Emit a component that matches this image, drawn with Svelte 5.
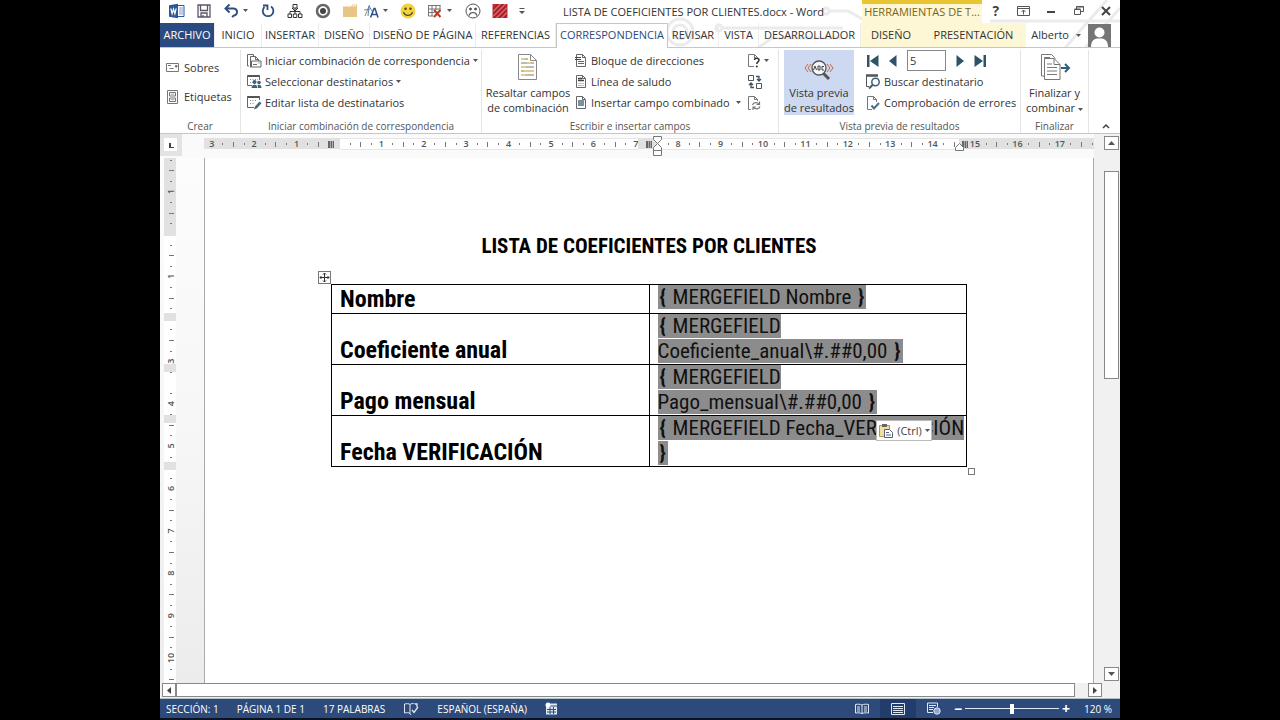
<script>
  let quick = [
    'word',
    'save',
    'undo',
    'redo',
    'tree',
    'target',
    'folder',
    'styles',
    'smile',
    'grid',
    'sad',
    'hatch',
    'more',
  ]
  let tabs = [
    'INICIO',
    'INSERTAR',
    'DISEÑO',
    'DISEÑO DE PÁGINA',
    'REFERENCIAS',
    'CORRESPONDENCIA',
    'REVISAR',
    'VISTA',
    'DESARROLLADOR',
  ]
  let toolTabs = ['DISEÑO', 'PRESENTACIÓN']
  let rows = [
    { name: 'Nombre', code: ['MERGEFIELD Nombre'] },
    { name: 'Coeficiente anual', code: ['MERGEFIELD', 'Coeficiente_anual\\#.##0,00'] },
    { name: 'Pago mensual', code: ['MERGEFIELD', 'Pago_mensual\\#.##0,00'] },
    { name: 'Fecha VERIFICACIÓN', code: ['MERGEFIELD Fecha_VERIFICACIÓN', ''] },
  ]

  let record = 5
  let zoom = 50

  const CM = 42.4

  // one mark for each quarter: number, dot, half line, dot
  function marks(from, to, zero, skip) {
    let list = []
    for (let q = from * 4; q <= to * 4; q++) {
      let n = Math.abs(q / 4)
      if (skip.includes(q)) continue
      list.push({
        at: zero + (q * CM) / 4,
        kind: q % 4 === 0 ? 'num' : q % 2 === 0 ? 'half' : 'dot',
        n,
      })
    }
    return list
  }

  let across = marks(-3, 17.75, 135, [0, 29, 30, 59])
  let down = marks(-1.75, 10.5, 76, [0, 8, 14, 22])
</script>

{#snippet icon(name)}
  {#if name === 'word'}
    <svg width="16" height="16" viewBox="0 0 16 16">
      <path d="M8 2.5h7v11H8" fill="#fff" stroke="#2b579a" />
      <path d="M10 5h4M10 7h4M10 9h4M10 11h4" stroke="#7f9cc9" />
      <path d="M0 2.2 9 .8v14.4L0 13.8z" fill="#2b579a" />
      <path d="m1.8 5.3 1.3 5.4L4.5 6l1.4 4.7 1.3-5.4" fill="none" stroke="#fff" stroke-width="1.2" />
    </svg>
  {:else if name === 'save'}
    <svg width="16" height="16" viewBox="0 0 16 16" fill="none" stroke="#5d5468" stroke-width="1.3">
      <path d="M2 2h12v12H2z" />
      <path d="M4.5 2v5.5h7V2M5 14v-4h6v4M7 14v-2" />
    </svg>
  {:else if name === 'undo'}
    <svg width="16" height="16" viewBox="0 0 16 16" fill="none" stroke="#2f4f83" stroke-width="2">
      <path d="M3 5.5h7a3.500 3.500 0 0 1 1 7L9 14" />
      <path d="M6.500 1.500 2.500 5.500l4 4" />
    </svg>
  {:else if name === 'redo'}
    <svg width="16" height="16" viewBox="0 0 16 16" fill="none" stroke="#2f4f83" stroke-width="1.8">
      <path d="M11 3.500A5.300 5.300 0 1 1 4.500 4" />
      <path d="M3 2.500h4.500V7" />
    </svg>
  {:else if name === 'tree'}
    <svg width="16" height="16" viewBox="0 0 16 16" fill="#fff" stroke="#333">
      <path d="M8 5v3M3 11V8.500h10V11M8 8v3" fill="none" />
      <path d="M6 1.500h4v3.500H6zM1 11h3.500v3.500H1zM6.300 11h3.500v3.500H6.300zM11.500 11H15v3.500h-3.500z" />
      <path d="m5 5 3 3 3-3" fill="none" />
    </svg>
  {:else if name === 'target'}
    <svg width="16" height="16" viewBox="0 0 16 16">
      <circle cx="8" cy="8" r="6" fill="#fff" stroke="#666" stroke-width="2.5" />
      <circle cx="8" cy="8" r="3" fill="#444" />
    </svg>
  {:else if name === 'folder'}
    <svg width="16" height="16" viewBox="0 0 16 16">
      <path d="M1 3.500h8L10.500 1.500H15V14H1z" fill="#e9c585" />
      <path d="M10.500 2.800H14" stroke="#fff" />
    </svg>
  {:else if name === 'styles'}
    <svg width="16" height="16" viewBox="0 0 16 16" fill="none">
      <path d="M2 13 6.500 2M1 7l6-1" stroke="#888" />
      <path d="m5 13 1-10 3 5" stroke="#5b7fae" />
      <path d="M7.500 14.500 11 5.500h1l3 9M9 11.500h5" stroke="#2f4f83" stroke-width="1.5" />
    </svg>
  {:else if name === 'smile'}
    <svg width="16" height="16" viewBox="0 0 16 16">
      <circle cx="8" cy="8" r="7.5" fill="#f6d33c" />
      <circle cx="5.5" cy="5.8" r="1.2" fill="#443" />
      <circle cx="10.5" cy="5.8" r="1.2" fill="#443" />
      <path d="M3.500 9c1.500 4.500 7.500 4.500 9 0" fill="none" stroke="#443" stroke-width="1.2" />
    </svg>
  {:else if name === 'grid'}
    <svg width="16" height="16" viewBox="0 0 16 16" fill="none">
      <path d="M1.500 2.500h12M1.500 6h12M1.500 9.500h6M1.500 13h5M1.500 2v11M5 2v11M9 2v5M13 2v5" stroke="#777" />
      <path d="m7 7 6.500 7M13.500 7 7 14" stroke="#b83a26" stroke-width="2" />
    </svg>
  {:else if name === 'sad'}
    <svg width="16" height="16" viewBox="0 0 16 16" fill="none" stroke="#555">
      <circle cx="8" cy="8" r="7" fill="#fff" />
      <circle cx="5.5" cy="6" r="1" fill="#444" />
      <circle cx="10.5" cy="6" r="1" fill="#444" />
      <path d="M4 12.500c1.200-4 6.800-4 8 0" stroke-width="1.2" />
    </svg>
  {:else if name === 'hatch'}
    <svg width="16" height="16" viewBox="0 0 16 16">
      <path d="M.5 1h15v14H.5z" fill="#bd2c35" />
      <path d="m1 6 5-5M1 11 11 1M2 15 15 2M7 15l8-8M12 15l3-3" stroke="#8f1f28" />
      <path d="m1 8.500 7.500-7.500M1 13.500 13.500 1M4.500 15 15 4.500M9.500 15 15 9.500" stroke="#e88a8f" />
    </svg>
  {:else if name === 'more'}
    <svg width="8" height="8" viewBox="0 0 8 8">
      <path d="M1.500 1.500h5" stroke="#555" />
      <path d="M1 4h6L4 7z" fill="#555" />
    </svg>
  {:else if name === 'caret'}
    <svg class="caret" width="5" height="3" viewBox="0 0 5 3">
      <path d="M0 0h5L2.500 3z" fill="#555" />
    </svg>
  {:else if name === 'envelope'}
    <svg width="16" height="14" viewBox="0 0 16 14" fill="none" stroke="#777">
      <path d="M1.500 2.500h12v8h-12z" fill="#fff" />
      <path d="M3 4.500h3M4.500 7.500h4" />
      <path d="M10.500 4.500h1.500v1.500h-1.500z" fill="#555" />
    </svg>
  {:else if name === 'labels'}
    <svg width="16" height="16" viewBox="0 0 16 16" fill="none" stroke="#777">
      <path d="M2.500 1.500h10v13h-10z" fill="#fff" />
      <path d="M4.500 3.500h6v3.500h-6zM4.500 9h6v3.500h-6z" />
      <path d="M5.500 5.200h4M5.500 10.700h4" stroke="#aaa" />
    </svg>
  {:else if name === 'start'}
    <svg width="16" height="16" viewBox="0 0 16 16" fill="none" stroke="#666">
      <path d="M3 13H1.500V1.500h6V3" />
      <path d="M4.500 14.500V3.500h5l3 3V8" />
      <path d="M9.500 3.500v3h3" />
      <path d="M5.500 8h9.500v6H5.500z" fill="#fff" />
      <path d="M7 11.500h4M12.500 10h1" />
    </svg>
  {:else if name === 'people'}
    <svg width="16" height="16" viewBox="0 0 16 16" fill="none">
      <path d="M6 11.500H1.500v-10h12V6" stroke="#666" />
      <path d="M1.500 2h12" stroke="#555" stroke-width="2" />
      <path d="M4 5.500h8M4 8.500h3" stroke="#888" stroke-dasharray="1 1.5" />
      <circle cx="8.5" cy="8" r="2" fill="#3b6179" />
      <circle cx="13" cy="8.5" r="1.8" fill="#3b6179" />
      <path d="M5.500 14c0-4.500 6-4.500 6 0zM12 14c0-2-.3-2.500-.5-3 2-1 4 0 4 3z" fill="#3b6179" />
    </svg>
  {:else if name === 'edit'}
    <svg width="16" height="16" viewBox="0 0 16 16" fill="none">
      <path d="M8 12.500H1.500v-11h12V5" stroke="#666" />
      <path d="M1.500 2h12" stroke="#555" stroke-width="2" />
      <path d="M4 5.500h7M4 8.500h5" stroke="#888" stroke-dasharray="1 1.5" />
      <path d="m9 11.500 4.500-5 2 1.800-4.500 5-3 1.200z" fill="#4c6579" />
    </svg>
  {:else if name === 'highlight'}
    <svg width="24" height="28" viewBox="0 0 24 28" fill="none">
      <path d="M2.500 1.500h12l6 6v19h-18z" fill="#fff" stroke="#888" />
      <path d="M14.500 1.500v6h6" stroke="#888" />
      <path d="M5 6h4M11 10h4M5 14h5M8 18h10M5 22h5" stroke="#e3cd84" stroke-width="2" />
      <path d="M9 6h3M5 10h6M15 10h3M10 14h8M5 18h3M10 22h8" stroke="#777" />
    </svg>
  {:else if name === 'address' || name === 'greeting' || name === 'field'}
    <svg width="14" height="15" viewBox="0 0 14 15" fill="none" stroke="#666">
      <path d="M2.500 1.500h6l3 3v9h-9z" fill="#fff" />
      <path d="M8.500 1.500v3h3" />
      {#if name === 'field'}
        <path d="M4 6h6M4 8h6M4 10h6" stroke="#4c6f87" stroke-width="1.4" />
      {:else if name === 'greeting'}
        <path d="M4 4.500h4M4 6.500h6" stroke="#444" stroke-width="1.4" />
        <path d="M4 9.500h6M4 11.500h6" stroke="#bbb" />
      {:else}
        <path d="M1 4.500h6M1 6.500h6" stroke="#444" />
        <path d="M4 8.500h6M4 10.500h6" />
      {/if}
    </svg>
  {:else if name === 'rules'}
    <svg width="14" height="16" viewBox="0 0 14 16" fill="none">
      <path d="M7 13.500H1.500v-12h6l3 3" stroke="#777" />
      <path d="M7.500 1.500v3.500h2" stroke="#777" />
      <path d="M7.500 7c0-2.500 4.500-2.500 4.500 0 0 2-2.200 1.800-2.200 4" stroke="#333" stroke-width="1.5" />
      <circle cx="9.8" cy="13.5" r="1" fill="#333" />
    </svg>
  {:else if name === 'match'}
    <svg width="16" height="16" viewBox="0 0 16 16" fill="none" stroke="#555">
      <path d="M1.500 1.500h5v5h-5zM9.500 9.500h5v5h-5z" />
      <path d="M9 2.500h3V7M10 5l2 2 2-2M7 13.500H4V9M2 11l2-2 2 2" stroke="#3b5166" stroke-width="1.3" />
    </svg>
  {:else if name === 'refresh'}
    <svg width="14" height="16" viewBox="0 0 14 16" fill="none">
      <path d="M4 14.500H1.500v-13h6l3 3V6M7.500 1.500v3h3" stroke="#777" />
      <path d="M5.500 10c1-3 5-3 6.500-.8M12.500 6.500v3H9.500M13 11.500c-1 3-5 3-6.500.8M6 15v-3h3" stroke="#777" stroke-width="1.2" />
    </svg>
  {:else if name === 'preview'}
    <svg width="30" height="22" viewBox="0 0 30 22" fill="none">
      <path d="m4 5-3 4 3 4M7 5 4 9l3 4M23 5l3 4-3 4M26 5l3 4-3 4" stroke="#c9683f" />
      <path d="m19 14 6 6" stroke="#555" stroke-width="3" />
      <circle cx="15" cy="9" r="7" fill="#f3f6fb" stroke="#555" stroke-width="1.3" />
      <path d="M9.500 11 11 7l1.500 4M14 7v4h2V7zM20 7.500h-2v3.500h2" stroke="#444" />
    </svg>
  {:else if name === 'first'}
    <svg width="12" height="12" viewBox="0 0 12 12" fill="#2e5266">
      <path d="M0 0h2.500v12H0zM11.500 0v12L3 6z" />
    </svg>
  {:else if name === 'prev'}
    <svg width="12" height="12" viewBox="0 0 12 12" fill="#2e5266"><path d="M9.500 0v12L2 6z" /></svg>
  {:else if name === 'next'}
    <svg width="12" height="12" viewBox="0 0 12 12" fill="#2e5266"><path d="M2.500 0v12L10 6z" /></svg>
  {:else if name === 'last'}
    <svg width="12" height="12" viewBox="0 0 12 12" fill="#2e5266">
      <path d="M9.500 0H12v12H9.500zM.5 0v12L9 6z" />
    </svg>
  {:else if name === 'find'}
    <svg width="16" height="16" viewBox="0 0 16 16" fill="none">
      <path d="M4 12.500H1.500V2" stroke="#555" />
      <path d="M1 1.500h12" stroke="#555" stroke-width="2.5" />
      <circle cx="10.5" cy="8" r="3.7" stroke="#3b6179" stroke-width="1.5" />
      <path d="m8 10.500-4 4" stroke="#3b6179" stroke-width="2" />
    </svg>
  {:else if name === 'check'}
    <svg width="16" height="16" viewBox="0 0 16 16" fill="none">
      <path d="M7 14.500H2.500v-13h6l3 3V7M8.500 1.500v3h3" stroke="#777" />
      <path d="m6.500 10.500 2.500 3 5-5.500" stroke="#4b6d85" stroke-width="2" />
    </svg>
  {:else if name === 'finish'}
    <svg width="32" height="28" viewBox="0 0 32 28" fill="none">
      <path d="M5 23H2.500V1.500h10l4 4M5.500 26.500v-21H15l6 6v15z" stroke="#777" fill="#fff" />
      <path d="M15 5.500v6h6M8 11h5M8 14.500h10M8 18h10M8 21.500h10M5 4.500h6" stroke="#777" />
      <path d="M22 15h7M26 11l4 4-4 4" stroke="#2f5f7a" stroke-width="2" />
    </svg>
  {:else if name === 'paste'}
    <svg width="16" height="16" viewBox="0 0 16 16" fill="none">
      <path d="M1.500 2.500h10v11h-10z" fill="#f2dfa0" stroke="#b09a55" />
      <path d="M4 1h5v3H4z" fill="#666" />
      <path d="M6.500 6.500h5l3 3v5h-8z" fill="#fff" stroke="#55617c" />
      <path d="M8 9.500h3M8 12h5" stroke="#55617c" />
    </svg>
  {:else if name === 'proof'}
    <svg width="16" height="14" viewBox="0 0 16 14" fill="none" stroke="#dfe8f5">
      <path d="M7 11.500c-1-1-3-1-5.500-.5v-9C4 1.500 6 1.500 7 2.500zM7 2.500c1-1 3-1 4.500-.8M7 11.500l1 1.500" />
      <path d="m9 8 2 2.500L15 5M12 2h2v3" stroke-width="1.3" />
    </svg>
  {:else if name === 'macro'}
    <svg width="13" height="13" viewBox="0 0 13 13">
      <path d="M1 4.500h11v8H1z" fill="#dfe8f5" />
      <path d="M5 1.500h7v2H5z" fill="#dfe8f5" />
      <circle cx="3" cy="3" r="2.5" fill="#fff" />
      <path d="M2 7.500h9M2 10h9M5 5v7M8.500 5v7" stroke="#2d4a7a" />
    </svg>
  {:else if name === 'read'}
    <svg width="14" height="12" viewBox="0 0 14 12" fill="none" stroke="#dfe8f5">
      <path d="M7 10.500c-2-.8-4-.8-6.500-.5V1.500C3 1 5 1 7 2c2-1 4-1 6.500-.5V10c-2.500-.3-4.500-.3-6.500.5zM7 2v9" />
      <path d="M2 4h3M2 6h3M2 8h3M9 4h3M9 6h3M9 8h3" />
    </svg>
  {:else if name === 'print'}
    <svg width="14" height="12" viewBox="0 0 14 12">
      <path d="M.5.5h13v11H.5zM2 3.500h10M2 5.500h10M2 7.500h10M2 9.500h10" fill="none" stroke="#dfe8f5" />
    </svg>
  {:else if name === 'web'}
    <svg width="14" height="13" viewBox="0 0 14 13" fill="none" stroke="#dfe8f5">
      <path d="M6 10.500H.5V1h10v4M2 3.500h7M2 5.500h5M2 7.500h4" />
      <circle cx="10" cy="9" r="3.2" fill="#8fa5cb" />
    </svg>
  {/if}
{/snippet}

<div class="screen">
  <div class="window">
    <svg class="doodle" width="480" height="48" viewBox="0 0 480 48" fill="none" stroke="#ebebeb" stroke-width="3">
      <circle cx="40" cy="32" r="13" />
      <circle cx="40" cy="32" r="7" />
      <circle cx="79" cy="28" r="3" />
      <path d="M83 28h120M118 48l14-10h70M190 11h18l18 10M350 21h130M425 48l42-48M445 48l35-40" />
      <circle cx="186" cy="11" r="3" />
    </svg>

    <header class="titlebar">
      <div class="quick">
        {#each quick as name}
          <button class="q" aria-label={name}>
            {@render icon(name)}
            {#if ['undo', 'styles', 'grid'].includes(name)}{@render icon('caret')}{/if}
          </button>
        {/each}
      </div>
      <div class="title">LISTA DE COEFICIENTES POR CLIENTES.docx - Word</div>
      <div class="context">HERRAMIENTAS DE T...</div>
      <div class="controls">
        <button class="help" aria-label="Ayuda">?</button>
        <button aria-label="Presentación de la cinta">
          <svg width="13" height="10" viewBox="0 0 13 10" fill="none" stroke="#555">
            <path d="M.5.5h12v9H.5zM.5 2.500h12M6.500 8.500v-4M4.500 6l2-2 2 2" />
          </svg>
        </button>
        <button aria-label="Minimizar">
          <svg width="10" height="10" viewBox="0 0 10 10"><path d="M1 6h8" stroke="#444" stroke-width="2" /></svg>
        </button>
        <button aria-label="Restaurar">
          <svg width="10" height="9" viewBox="0 0 10 9" fill="none" stroke="#555">
            <path d="M.5 3.500h6v5h-6zM2.500 3V.5h7v5H7M.5 3h6M2.500 1h7" />
          </svg>
        </button>
        <button aria-label="Cerrar">
          <svg width="10" height="10" viewBox="0 0 10 10"><path d="m1 1 8 8M9 1 1 9" stroke="#444" stroke-width="2" /></svg>
        </button>
      </div>
    </header>

    <nav class="tabs">
      <button class="file">ARCHIVO</button>
      {#each tabs as tab}
        <button class:active={tab === 'CORRESPONDENCIA'}>{tab}</button>
      {/each}
      {#each toolTabs as tab}
        <button class="tool">{tab}</button>
      {/each}
      <button class="user">
        Alberto {@render icon('caret')}
        <svg width="23" height="23" viewBox="0 0 23 23">
          <path d="M0 0h23v23H0z" fill="#757575" />
          <circle cx="11.5" cy="8.5" r="5" fill="#fff" />
          <path d="M3 23c0-6 3-8 6-8.500h5c3 .5 6 2.500 6 8.500z" fill="#fff" />
        </svg>
      </button>
    </nav>

    <div class="ribbon">
      <section>
        <div class="body pair">
          <button>{@render icon('envelope')}Sobres</button>
          <button>{@render icon('labels')}Etiquetas</button>
        </div>
        <h2>Crear</h2>
      </section>
      <section>
        <div class="body list">
          <button>{@render icon('start')}Iniciar combinación de correspondencia{@render icon('caret')}</button>
          <button>{@render icon('people')}Seleccionar destinatarios{@render icon('caret')}</button>
          <button>{@render icon('edit')}Editar lista de destinatarios</button>
        </div>
        <h2>Iniciar combinación de correspondencia</h2>
      </section>
      <section>
        <div class="body write">
          <button class="big">{@render icon('highlight')}<span>Resaltar campos<br />de combinación</span></button>
          <div class="list">
            <button>{@render icon('address')}Bloque de direcciones</button>
            <button>{@render icon('greeting')}Línea de saludo</button>
            <button class="split">{@render icon('field')}Insertar campo combinado{@render icon('caret')}</button>
          </div>
          <div class="list">
            <button aria-label="Reglas">{@render icon('rules')}{@render icon('caret')}</button>
            <button aria-label="Asignar campos">{@render icon('match')}</button>
            <button aria-label="Actualizar etiquetas">{@render icon('refresh')}</button>
          </div>
        </div>
        <h2>Escribir e insertar campos</h2>
      </section>
      <section>
        <div class="body preview">
          <button class="big on">{@render icon('preview')}<span>Vista previa<br />de resultados</span></button>
          <div class="list">
            <div class="records">
              <button aria-label="Primer registro">{@render icon('first')}</button>
              <button aria-label="Registro anterior">{@render icon('prev')}</button>
              <input type="text" aria-label="Registro" bind:value={record} />
              <button aria-label="Registro siguiente">{@render icon('next')}</button>
              <button aria-label="Último registro">{@render icon('last')}</button>
            </div>
            <button>{@render icon('find')}Buscar destinatario</button>
            <button>{@render icon('check')}Comprobación de errores</button>
          </div>
        </div>
        <h2>Vista previa de resultados</h2>
      </section>
      <section>
        <div class="body">
          <button class="big">{@render icon('finish')}<span>Finalizar y<br />combinar {@render icon('caret')}</span></button>
        </div>
        <h2>Finalizar</h2>
      </section>
      <button class="collapse" aria-label="Contraer la cinta">
        <svg width="8" height="6" viewBox="0 0 8 6"><path d="m1 5 3-3 3 3" fill="none" stroke="#444" stroke-width="1.5" /></svg>
      </button>
    </div>

    <div class="work">
      <div class="corner"><span></span></div>
      <svg class="ruler" width="100%" height="24">
        <rect x="0" y="4" width="890" height="11" fill="#fff" />
        <path d="M0 4h136v11H0zM434 4h20v11h-20zM755 4h135v11H755z" fill="#e1e1e1" />
        <path d="M136 4.500h298M136 15.500h298M454 4.500h301M454 15.500h301" stroke="#e6e6e6" />
        {#each across as m}
          {#if m.kind === 'num'}
            <text x={m.at} y="13">{m.n}</text>
          {:else}
            <rect x={Math.round(m.at)} y={m.kind === 'half' ? 8 : 9} width="1" height={m.kind === 'half' ? 5 : 2} fill="#777" />
          {/if}
        {/each}
        <path d="M124 7h6v7h-6zM442 7h6v7h-6zM758 7h6v7h-6z" fill="#666" />
        <path d="M126.500 7v7M128.500 7v7M444.500 7v7M446.500 7v7M760.500 7v7M762.500 7v7" stroke="#aaa" />
        <path d="M449.500 2.500h8v3l-4 4 4 4v8h-8v-8l4-4-4-4zM449.500 16.500h8" class="marker" />
        <path d="M751.500 16.500v-3l4-4 4 4v3z" class="marker" />
      </svg>
      <div class="side">
        <svg width="12" height="100%">
          <rect width="12" height="100%" fill="#fff" />
          <path d="M0 0h12v78H0zM0 155h12v8H0zM0 206h12v8H0zM0 257h12v8H0zM0 304h12v8H0z" fill="#e1e1e1" />
          {#each down as m}
            {#if m.kind === 'num'}
              <text x="0" y="0" transform="translate(10 {m.at}) rotate(-90)">{m.n}</text>
            {:else}
              <rect x={m.kind === 'half' ? 5 : 6} y={Math.round(m.at)} width={m.kind === 'half' ? 5 : 2} height="1" fill="#777" />
            {/if}
          {/each}
        </svg>
      </div>
      <main class="page">
        <h1>LISTA DE COEFICIENTES POR CLIENTES</h1>
        <div class="frame">
          <table>
            <tbody>
              {#each rows as row}
                <tr>
                  <th scope="row">{row.name}</th>
                  <td>
                    <mark>
                      <b>&#123;</b>
                      {row.code[0]}{#if row.code.length > 1}<br />{row.code[1]}{/if}
                      <b>&#125;</b>
                    </mark>
                  </td>
                </tr>
              {/each}
            </tbody>
          </table>
          <span class="move">
            <svg width="11" height="11" viewBox="0 0 11 11" fill="none" stroke="#333">
              <path d="M5.500 1v9M1 5.500h9M4 2.500l1.500-1.500L7 2.500M4 8.500 5.500 10 7 8.500M2.500 4 1 5.500 2.500 7M8.500 4 10 5.500 8.500 7" />
            </svg>
          </span>
          <span class="resize"></span>
          <button class="paste">{@render icon('paste')}(Ctrl){@render icon('caret')}</button>
        </div>
      </main>
      <div class="vscroll">
        <button aria-label="Subir"><svg width="7" height="4"><path d="M0 4h7L3.500 0z" fill="#555" /></svg></button>
        <div class="track"><div class="thumb"></div></div>
        <button aria-label="Bajar"><svg width="7" height="4"><path d="M0 0h7L3.500 4z" fill="#555" /></svg></button>
      </div>
    </div>

    <div class="hscroll">
      <button aria-label="Izquierda"><svg width="4" height="7"><path d="M4 0v7L0 3.500z" fill="#444" /></svg></button>
      <div class="thumb"></div>
      <button aria-label="Derecha"><svg width="4" height="7"><path d="M0 0v7l4-3.500z" fill="#444" /></svg></button>
    </div>

    <footer class="status">
      <span>SECCIÓN: 1</span>
      <span>PÁGINA 1 DE 1</span>
      <span>17 PALABRAS</span>
      <button aria-label="Revisión">{@render icon('proof')}</button>
      <span>ESPAÑOL (ESPAÑA)</span>
      <button aria-label="Macros">{@render icon('macro')}</button>
      <div class="views">
        <button aria-label="Modo de lectura">{@render icon('read')}</button>
        <button class="on" aria-label="Diseño de impresión">{@render icon('print')}</button>
        <button aria-label="Diseño web">{@render icon('web')}</button>
      </div>
      <div class="zoom">
        <button aria-label="Alejar">−</button>
        <input type="range" aria-label="Zoom" bind:value={zoom} />
        <button aria-label="Acercar">+</button>
      </div>
      <span class="percent">120 %</span>
    </footer>
  </div>
</div>

<style>
  :global(body) {
    background: #000;
  }
  .screen {
    height: 100vh;
    display: flex;
    justify-content: center;
    font: 11px/14px 'Open Sans', 'Noto Sans', sans-serif;
    color: #333;
  }
  .window {
    position: relative;
    width: 75%;
    height: 100%;
    box-sizing: border-box;
    border-bottom: 2px solid #0b1322;
    display: flex;
    flex-direction: column;
    background: #fff;
    overflow: hidden;
  }
  button {
    font: inherit;
    color: inherit;
    background: none;
    border: 0;
    padding: 0;
    display: flex;
    align-items: center;
    white-space: nowrap;
  }
  svg {
    display: block;
    flex: none;
  }
  .doodle {
    position: absolute;
    top: 0;
    right: 0;
  }

  .titlebar {
    position: relative;
    display: grid;
    grid-template-columns: 385fr 317fr 120fr 138fr;
    height: 23px;
  }
  .quick {
    display: grid;
    grid-template-columns: 27px 27px 37px 27px 28px 27px 21px 37px 27px 38px 27px 26px 16px;
    padding-left: 9px;
    align-items: center;
    height: 21px;
  }
  .q {
    gap: 4px;
    justify-content: flex-start;
  }
  .title {
    text-align: center;
    padding-top: 5px;
    padding-right: 20px;
    white-space: nowrap;
  }
  .context {
    box-sizing: border-box;
    border-top: 4px solid #e8c531;
    background: #fdf7d6;
    color: #7d6312;
    text-align: center;
    padding-top: 1px;
    white-space: nowrap;
  }
  .controls {
    display: grid;
    grid-template-columns: repeat(5, 1fr);
    height: 21px;
  }
  .controls button {
    justify-content: center;
  }
  .controls .help {
    font-size: 14px;
    font-weight: 700;
    color: #444;
  }

  .tabs {
    position: relative;
    display: grid;
    grid-template-columns: 55fr 47fr 57fr 51fr 106fr 80fr 112fr 51fr 40fr 102fr 60fr 105fr 94fr;
    height: 25px;
    box-sizing: border-box;
    border-bottom: 1px solid #c6c6c6;
  }
  .tabs button {
    justify-content: center;
    border-right: 1px solid #ececec;
  }
  .tabs .file {
    background: #2b4a7f;
    color: #fff;
  }
  .tabs .active {
    background: #fff;
    color: #2b4a7f;
    border: 1px solid #c6c6c6;
    border-bottom: 0;
    margin-bottom: -1px;
    padding-bottom: 2px;
  }
  .tabs .tool {
    background: #fdf7d6;
    border: 0;
  }
  .tabs .user {
    border: 0;
    justify-content: flex-end;
    gap: 7px;
    padding-right: 9px;
  }

  .ribbon {
    display: grid;
    grid-template-columns: 81fr 241fr 297fr 242fr 68fr 31fr;
    height: 86px;
    box-sizing: border-box;
    border-bottom: 1px solid #c6c6c6;
  }
  section {
    display: flex;
    flex-direction: column;
    justify-content: space-between;
    border-right: 1px solid #e4e4e4;
    margin: 2px 0 0;
    min-width: 0;
  }
  h2 {
    margin: 0;
    font: inherit;
    font-size: 10px;
    color: #555;
    text-align: center;
    white-space: nowrap;
  }
  .body button {
    gap: 3px;
  }
  .pair {
    display: grid;
    gap: 14px;
    padding: 11px 0 0 5px;
  }
  .list {
    display: grid;
    grid-template-rows: repeat(3, 21px);
    padding-left: 5px;
  }
  .write {
    display: grid;
    grid-template-columns: 92px 173px 1fr;
  }
  .write .list {
    padding-left: 0;
  }
  .write .split .caret {
    margin-left: 3px;
  }
  .body .big {
    flex-direction: column;
    justify-content: flex-end;
    gap: 4px;
    line-height: 15px;
    width: 100%;
    height: 65px;
  }
  .big .caret {
    display: inline;
    vertical-align: middle;
  }
  .preview {
    display: grid;
    grid-template-columns: 70px 1fr;
    padding-left: 5px;
    gap: 6px;
  }
  .big.on {
    background: #cdd9f0;
  }
  .records {
    display: flex;
    align-items: center;
    gap: 8px;
    padding-left: 2px;
  }
  .body .records button {
    gap: 0;
  }
  .records input {
    width: 39px;
    height: 21px;
    box-sizing: border-box;
    border: 1px solid #888;
    padding: 0 2px;
    font: inherit;
    color: inherit;
  }
  .collapse {
    justify-content: center;
    align-items: flex-end;
    padding: 0 0 4px 2px;
  }

  .work {
    flex: 1;
    min-height: 0;
    display: grid;
    grid-template-columns: 44px 1fr 26px;
    grid-template-rows: 24px 1fr;
    background: #fafafa;
  }
  .corner {
    width: 22px;
    height: 22px;
    box-sizing: border-box;
    background: #e3e3e3;
    padding: 4px;
  }
  .corner span {
    display: block;
    width: 4px;
    height: 4px;
    padding: 2px 2px 1px 1px;
    border: 3px solid #fff;
    background: linear-gradient(#444, #444) 2px 2px / 2px 5px no-repeat,
      linear-gradient(#444, #444) 2px 6px / 5px 2px no-repeat, #fff;
  }
  .ruler text,
  .side text {
    font-size: 9px;
    font-weight: 600;
    fill: #555;
    text-anchor: middle;
  }
  .marker {
    fill: #fff;
    stroke: #777;
  }
  .side {
    grid-column: 1;
    padding-left: 4px;
    background: linear-gradient(#fcfcfc, #f7f7f7 50%, #ececec);
    min-height: 0;
  }
  .page {
    grid-column: 2;
    border: 1px solid #aaa;
    border-width: 0 1px;
    background: #fff;
    padding: 75px 126px 0;
    font-family: 'Roboto Condensed', 'Liberation Sans Narrow', sans-serif;
    color: #000;
    min-height: 0;
  }
  h1 {
    margin: 0 0 24px;
    font-size: 21px;
    line-height: 27px;
    font-weight: 700;
    text-align: center;
    white-space: nowrap;
  }
  .frame {
    position: relative;
  }
  table {
    width: 100%;
    table-layout: fixed;
    border-collapse: collapse;
  }
  th,
  td {
    border: 1px solid #000;
    padding: 0 8px;
    text-align: left;
    vertical-align: bottom;
    white-space: nowrap;
  }
  th {
    font-size: 24px;
    line-height: 28px;
  }
  td {
    font-size: 21px;
    line-height: 25px;
    vertical-align: top;
  }
  mark {
    background: #8c8c8c;
    color: #111;
  }
  mark b {
    padding: 0 2px;
  }
  .move,
  .resize,
  .paste {
    position: absolute;
  }
  .move {
    left: -13px;
    top: -13px;
    border: 1px solid #777;
    background: #fff;
  }
  .resize {
    right: -8px;
    bottom: -8px;
    width: 5px;
    height: 5px;
    border: 1px solid #777;
    background: #fff;
  }
  .paste {
    right: 35px;
    bottom: 26px;
    width: 56px;
    height: 21px;
    justify-content: center;
    gap: 3px;
    background: #fff;
    border: 1px solid #bbb;
    font-family: 'Open Sans', sans-serif;
    color: #444;
  }

  .vscroll {
    grid-column: 3;
    grid-row: 1 / 3;
    display: flex;
    flex-direction: column;
    padding: 2px 1px 2px 10px;
    background: #f1f1f1;
  }
  .vscroll button {
    height: 14px;
    justify-content: center;
    border: 1px solid #888;
    background: #fff;
  }
  .track {
    flex: 1;
    display: grid;
    grid-template-rows: 21fr 208fr 288fr;
  }
  .track .thumb {
    grid-row: 2;
    border: 1px solid #888;
    background: #fff;
  }
  .hscroll {
    display: grid;
    grid-template-columns: 14px 1fr 14px;
    height: 16px;
    box-sizing: border-box;
    padding: 0 18px 1px 2px;
    background: #f1f1f1;
    border-bottom: 1px solid #b5c0cc;
  }
  .hscroll .thumb {
    margin-right: 13px;
  }
  .hscroll .thumb,
  .hscroll button {
    border: 1px solid #888;
    background: #fff;
    justify-content: center;
  }

  .status {
    display: flex;
    align-items: center;
    height: 19px;
    padding: 0 8px 0 6px;
    background: #2d4a7a;
    color: #fff;
    font-size: 10px;
    gap: 18px;
    white-space: nowrap;
  }
  .views {
    display: flex;
    height: 100%;
    margin-left: auto;
  }
  .views button {
    width: 36px;
    justify-content: center;
  }
  .views .on {
    background: #223c6b;
  }
  .zoom {
    display: flex;
    align-items: center;
    gap: 3px;
    margin: 0 -4px 0 -16px;
  }
  .zoom button {
    font-size: 14px;
    font-weight: 700;
  }
  .zoom input {
    appearance: none;
    width: 94px;
    height: 12px;
    margin: 0;
    background: linear-gradient(#dfe8f5, #dfe8f5) center / 100% 1px no-repeat;
  }
  .zoom input::-webkit-slider-thumb {
    appearance: none;
    width: 4px;
    height: 10px;
    background: #fff;
  }
</style>
